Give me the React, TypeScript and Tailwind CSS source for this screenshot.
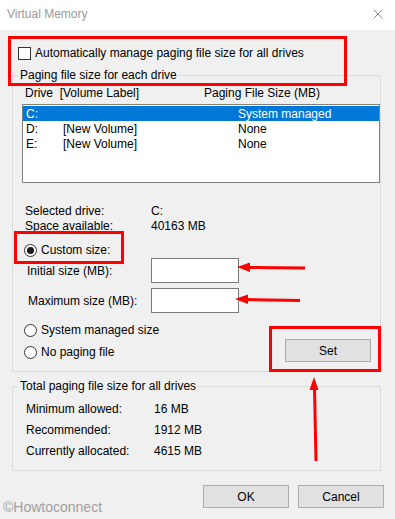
export default function App() {
  return (
    <div className="relative w-[395px] h-[519px] overflow-hidden bg-[#f0f0f0] font-['Liberation_Sans',Arial,sans-serif] text-[12px] leading-[16px] text-black">
      {/* title bar */}
      <div className="h-[30px] bg-white flex items-center justify-between pl-[7px] pr-[12px] pb-[2px]">
        <span className="text-[#9a9a9a]">Virtual Memory</span>
        <svg width="10" height="10" viewBox="0 0 10 10" className="mt-[-1px]">
          <path d="M0.5 0.5 L9.5 9.5 M9.5 0.5 L0.5 9.5" stroke="#8a8a8a" strokeWidth="1" />
        </svg>
      </div>

      <div className="mt-[15px] h-[16px] flex items-center pl-[18px]">
        <div className="w-[13px] h-[13px] border border-[#333333] bg-white" />
        <span className="ml-[4px]">Automatically manage paging file size for all drives</span>
      </div>

      {/* paging file size for each drive */}
      <div className="mt-[14px] ml-[12px] w-[369px] h-[297px] border border-[#dcdcdc]">
        <div className="-mt-[9px] ml-[6px] w-fit px-[1px] bg-[#f0f0f0]">Paging file size for each drive</div>

        <div className="mt-[2px] h-[16px] flex pl-[12px]">
          <span className="w-[179px] whitespace-pre">Drive  [Volume Label]</span>
          <span>Paging File Size (MB)</span>
        </div>

        <div className="mt-[3px] ml-[9px] w-[358px] h-[79px] border border-[#828282] bg-white pt-[1px]">
          <div className="h-[15px] flex items-center bg-[#0078d7] text-white">
            <span className="w-[40px] pl-[3px]">C:</span>
            <span className="w-[175px]"></span>
            <span>System managed</span>
          </div>
          <div className="h-[15px] flex items-center">
            <span className="w-[40px] pl-[3px]">D:</span>
            <span className="w-[175px]">[New Volume]</span>
            <span>None</span>
          </div>
          <div className="h-[15px] flex items-center">
            <span className="w-[40px] pl-[3px]">E:</span>
            <span className="w-[175px]">[New Volume]</span>
            <span>None</span>
          </div>
        </div>

        <div className="mt-[20px] h-[15px] flex items-center pl-[12px]">
          <span className="w-[126px]">Selected drive:</span>
          <span>C:</span>
        </div>
        <div className="h-[15px] flex items-center pl-[12px]">
          <span className="w-[126px]">Space available:</span>
          <span>40163 MB</span>
        </div>

        <div className="mt-[10px] h-[14px] flex items-center pl-[11px]">
          <Radio checked />
          <span className="ml-[4px]">Custom size:</span>
        </div>

        <div className="mt-[1px] h-[25px] flex items-center pl-[14px]">
          <span className="w-[124px]">Initial size (MB):</span>
          <div className="w-[88px] h-[25px] border border-[#7a7a7a] bg-white" />
        </div>
        <div className="mt-[5px] h-[25px] flex items-center pl-[15px]">
          <span className="w-[123px]">Maximum size (MB):</span>
          <div className="w-[88px] h-[25px] border border-[#7a7a7a] bg-white" />
        </div>

        <div className="mt-[10px] flex">
          <div className="w-[272px] pl-[11px]">
            <div className="h-[14px] flex items-center">
              <Radio />
              <span className="ml-[4px]">System managed size</span>
            </div>
            <div className="mt-[8px] h-[14px] flex items-center">
              <Radio />
              <span className="ml-[4px]">No paging file</span>
            </div>
          </div>
          <button className="mt-[16px] w-[86px] h-[23px] border border-[#adadad] bg-[#e1e1e1] flex items-center justify-center">
            Set
          </button>
        </div>
      </div>

      {/* totals */}
      <div className="mt-[14px] ml-[12px] w-[369px] h-[85px] border border-[#dcdcdc]">
        <div className="-mt-[9px] ml-[6px] w-fit px-[1px] bg-[#f0f0f0]">Total paging file size for all drives</div>
        <div className="mt-[4px] h-[21px] flex items-center pl-[13px]">
          <span className="w-[128px]">Minimum allowed:</span>
          <span>16 MB</span>
        </div>
        <div className="h-[21px] flex items-center pl-[13px]">
          <span className="w-[128px]">Recommended:</span>
          <span>1912 MB</span>
        </div>
        <div className="h-[21px] flex items-center pl-[13px]">
          <span className="w-[128px]">Currently allocated:</span>
          <span>4615 MB</span>
        </div>
      </div>

      <div className="mt-[14px] flex justify-end gap-[9px] pr-[11px]">
        <button className="w-[86px] h-[23px] border border-[#adadad] bg-[#e1e1e1] flex items-center justify-center">OK</button>
        <button className="w-[86px] h-[23px] border border-[#adadad] bg-[#e1e1e1] flex items-center justify-center">Cancel</button>
      </div>

      {/* watermark */}
      <div className="absolute left-[3px] top-[499px] text-[14px] leading-[16px] text-[#a0a0a0]">©Howtoconnect</div>

      {/* red annotations */}
      <div className="absolute left-[8px] top-[36px] w-[339px] h-[50px] border-[3px] border-[#ff0000]" />
      <div className="absolute left-[14px] top-[231px] w-[110px] h-[33px] border-[3px] border-[#ff0000]" />
      <div className="absolute left-[269px] top-[326px] w-[112px] h-[46px] border-[3px] border-[#ff0000]" />
      <svg className="absolute left-0 top-0 pointer-events-none" width="395" height="519" viewBox="0 0 395 519">
        <path d="M305 268 L248 267.5" stroke="#ff0000" strokeWidth="3" />
        <polygon points="237,267 250,262.5 250,272" fill="#ff0000" />
        <path d="M300 300.5 L246 299.5" stroke="#ff0000" strokeWidth="3" />
        <polygon points="235,299 248,294.5 248,304" fill="#ff0000" />
        <path d="M316 461 L314.5 388" stroke="#ff0000" strokeWidth="3" />
        <polygon points="314,377 309.5,390 318.5,390" fill="#ff0000" />
      </svg>
    </div>
  );
}

function Radio({ checked = false }: { checked?: boolean }) {
  return (
    <div className="w-[13px] h-[13px] rounded-full border border-[#333333] bg-white flex items-center justify-center">
      {checked && <div className="w-[7px] h-[7px] rounded-full bg-[#1a1a1a]" />}
    </div>
  );
}
